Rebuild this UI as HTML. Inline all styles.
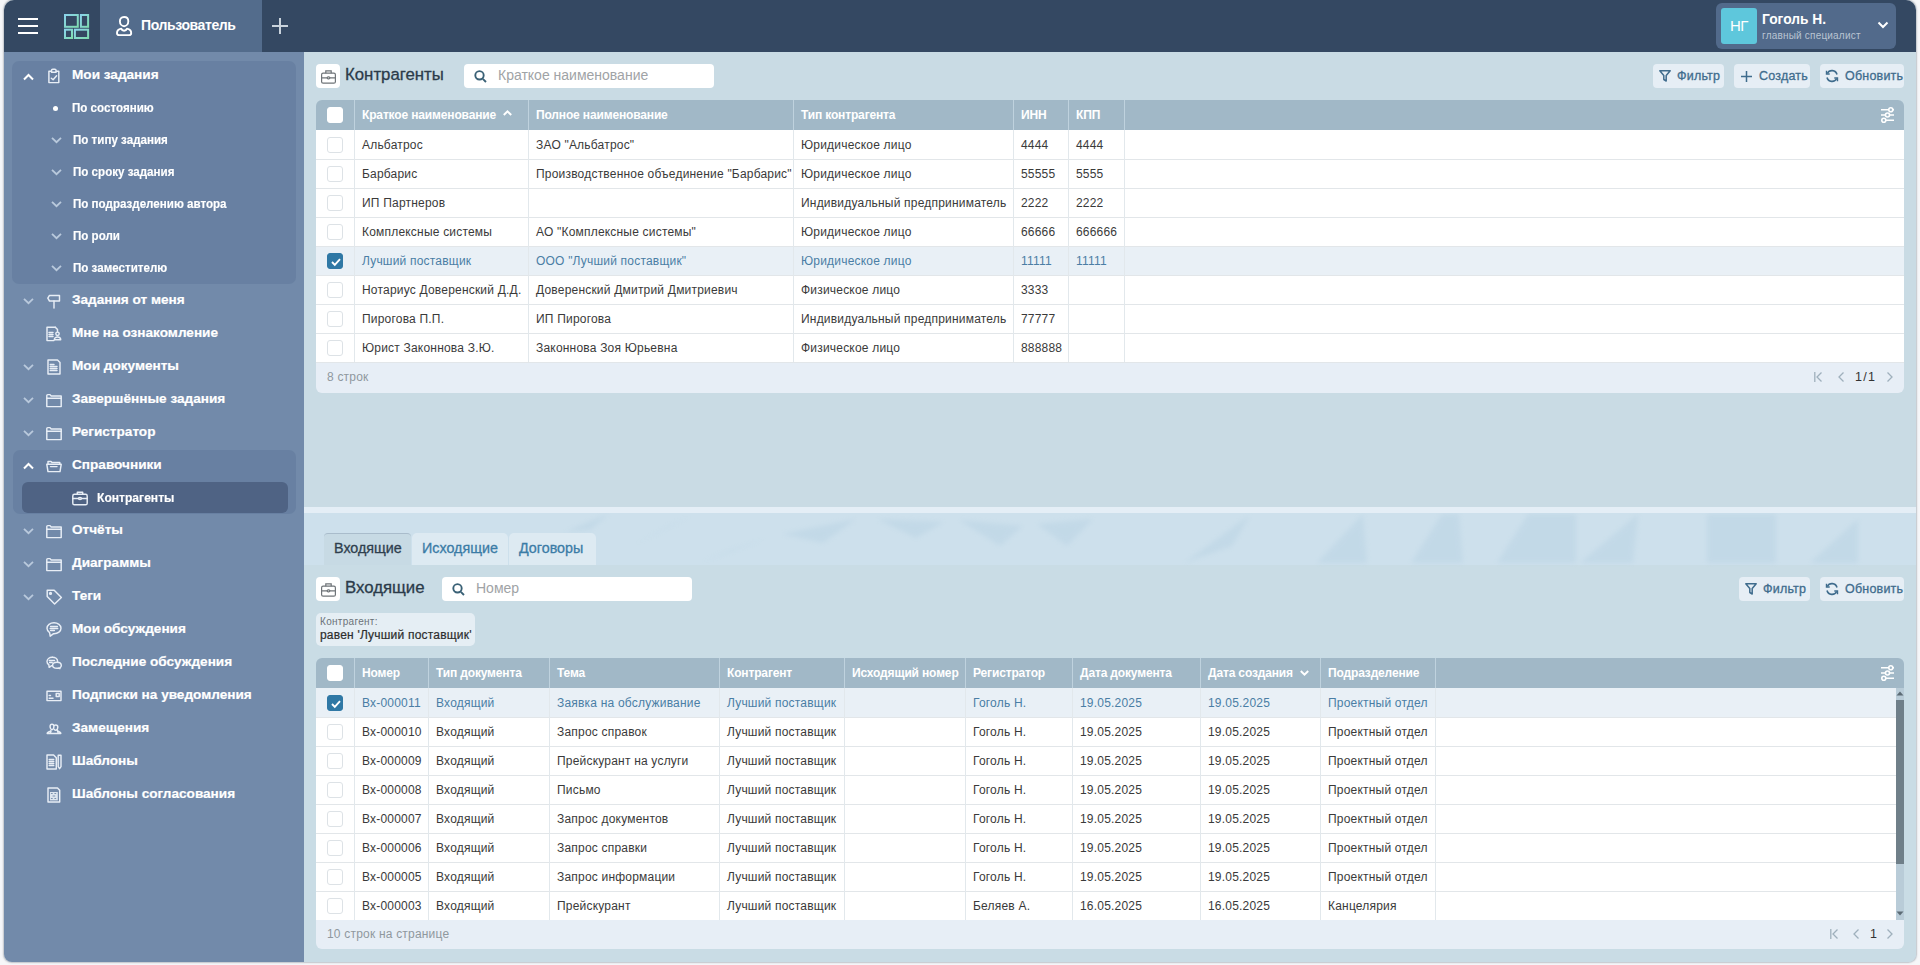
<!DOCTYPE html>
<html><head><meta charset="utf-8"><style>
*{box-sizing:border-box;margin:0;padding:0}
html,body{width:1920px;height:965px;overflow:hidden;background:#f6f7f9;font-family:"Liberation Sans",sans-serif}
.abs{position:absolute}
#frame{position:absolute;left:4px;top:0;width:1912px;height:962px;border-radius:10px 10px 8px 8px;overflow:hidden;background:#c9d9e3;box-shadow:0 0 1.5px 0.5px rgba(90,100,115,0.35)}
#hdr{position:absolute;left:0;top:0;width:1912px;height:52px;background:#344862}
#side{position:absolute;left:0;top:52px;width:300px;height:910px;background:#728aaa}
#main{position:absolute;left:300px;top:52px;width:1612px;height:910px;background:#c9dbe4}
.t{position:absolute;white-space:nowrap}
.si{position:absolute;left:68px;color:#fff;font-weight:bold;font-size:13.6px;line-height:16px;white-space:nowrap;-webkit-text-stroke:0.2px #fff}
.ss{position:absolute;color:#fff;font-weight:bold;font-size:12.6px;line-height:14px;white-space:nowrap;-webkit-text-stroke:0.15px #fff;transform:scaleX(0.92);transform-origin:0 0}
svg{position:absolute;overflow:visible}
.grp{position:absolute;background:#6880a2;border-radius:7px}
.th{position:absolute;top:0;height:30px;background:#a1b8c7;border-radius:6px 6px 0 0}
.hc{position:absolute;top:0;height:30px;color:#fff;font-weight:bold;font-size:12px;letter-spacing:-0.25px;line-height:30px;white-space:nowrap}
.vl{position:absolute;width:1px;background:#dfe6eb}
.row{position:absolute;left:0;height:29px;background:#fff;border-bottom:1px solid #e1e6ea}
.cell{position:absolute;top:0;height:28px;line-height:29px;font-size:12px;color:#333;white-space:nowrap}
.sel .cell{color:#4a7ea5}
.row.sel{background:#e9f0f6}
.cb{position:absolute;width:16px;height:16px;border:1px solid #dde2e6;border-radius:3px;background:#fff}
.cbc{background:#2f78a5;border-color:#2f78a5}
.btn{position:absolute;height:24px;background:#e6eef5;border-radius:4px;color:#3f6c8d;font-size:12px;line-height:24px;white-space:nowrap}
.foot{position:absolute;height:30px;background:#e7eef6;border-radius:0 0 6px 6px;font-size:12px;color:#8c959b;line-height:30px}
</style></head><body>
<div id="frame">
<div id="hdr">
<div class="abs" style="left:14px;top:18px;width:20px;height:2px;background:#fff"></div>
<div class="abs" style="left:14px;top:25px;width:20px;height:2px;background:#fff"></div>
<div class="abs" style="left:14px;top:32px;width:20px;height:2px;background:#fff"></div>
<svg style="left:60px;top:14px" width="25" height="25" viewBox="0 0 25 25" fill="none" stroke-width="2">
<defs><linearGradient id="dg" x1="0" y1="0" x2="1" y2="1"><stop offset="0" stop-color="#8ad3ea"/><stop offset="1" stop-color="#7fdcb0"/></linearGradient></defs>
<g stroke="url(#dg)"><rect x="1" y="1" width="12.8" height="11.8"/><rect x="16.9" y="1" width="7.2" height="11.8"/>
<rect x="1" y="15.7" width="7" height="8.3"/><rect x="10.9" y="15.7" width="13.2" height="8.3"/></g></svg>
<div class="abs" style="left:96px;top:0;width:162px;height:52px;background:#536c8c"></div>
<svg style="left:112px;top:15px" width="17" height="22" viewBox="0 0 17 22" fill="none" stroke="#fff" stroke-width="1.9" stroke-linejoin="round">
<path d="M8.1 2C5 2 3.9 4 3.9 6.2 3.9 9 5.8 11.2 8.1 11.2s4.2-2.2 4.2-5C12.3 4 11.2 2 8.1 2z"/>
<path d="M5.2 13.6C2.8 14.1 1 15.6 1 17.9 1 19.4 1.8 20.1 3.2 20.1H13c1.4 0 2.2-.7 2.2-2.2 0-2.3-1.8-3.8-4.2-4.3-.5 1.3-1.6 2.1-2.9 2.1s-2.4-.8-2.9-2.1z"/></svg>
<div class="t" style="left:137px;top:17px;color:#fff;font-weight:bold;font-size:14px;letter-spacing:-0.4px;line-height:16px">Пользователь</div>
<div class="abs" style="left:268px;top:24.5px;width:16px;height:2px;background:#c9d3dc"></div>
<div class="abs" style="left:275px;top:18px;width:2px;height:16px;background:#c9d3dc"></div>
<div class="abs" style="left:1712px;top:3px;width:180px;height:46px;background:#526a8b;border-radius:6px"></div>
<div class="abs" style="left:1717px;top:8px;width:36px;height:36px;background:#5ec7dc;border-radius:3px;color:#fff;font-size:15px;line-height:36px;text-align:center;letter-spacing:-0.5px">НГ</div>
<div class="t" style="left:1758px;top:12.2px;color:#fff;font-weight:bold;font-size:13.8px;line-height:15px">Гоголь Н.</div>
<div class="t" style="left:1758px;top:30px;color:#b9c4d2;font-size:10px;letter-spacing:0.2px;line-height:12px">главный специалист</div>
<svg style="left:1873px;top:21px" width="12" height="8" viewBox="0 0 12 8" fill="none" stroke="#fff" stroke-width="2"><path d="M1.5 1.5l4.5 4.5 4.5-4.5"/></svg>
</div>
<div id="side">
<div class="grp" style="left:8px;top:9px;width:284px;height:223px"></div>
<div class="grp" style="left:8.5px;top:398px;width:283.5px;height:64px"></div>
<div class="abs" style="left:18px;top:430px;width:266px;height:31px;background:#4f6384;border-radius:6px"></div>
<svg style="left:18.5px;top:21.5px" width="11" height="6" viewBox="0 0 11 6" fill="none" stroke="#fff" stroke-width="2"><path d="M1 5.5L5.5 1 10 5.5"/></svg>
<svg style="left:38px;top:11px" width="24" height="24" viewBox="0 0 24 24" fill="none" stroke="#e8eef6" stroke-width="1.45" stroke-linejoin="round" stroke-linecap="round"><path d="M9.5 8.3H6.9v11.3h9.9V8.3h-2.6"/><path d="M9.5 9.2V7.5c0-.8.6-1.3 1.3-1.3h2c.8 0 1.3.5 1.3 1.3v1.7z"/><path d="M9.3 15.3l1.8 1.5 3.5-4"/></svg>
<div class="si" style="left:68px;top:15px">Мои задания</div>
<div class="abs" style="left:48.5px;top:53.5px;width:5px;height:5px;border-radius:50%;background:#fff"></div>
<div class="ss" style="left:68px;top:48.5px">По состоянию</div>
<svg style="left:46.5px;top:84.5px" width="11" height="6" viewBox="0 0 11 6" fill="none" stroke="#b9c9dc" stroke-width="1.8"><path d="M1 0.8L5.5 5.2 10 0.8"/></svg>
<div class="ss" style="left:69.2px;top:80.5px">По типу задания</div>
<svg style="left:46.5px;top:116.5px" width="11" height="6" viewBox="0 0 11 6" fill="none" stroke="#b9c9dc" stroke-width="1.8"><path d="M1 0.8L5.5 5.2 10 0.8"/></svg>
<div class="ss" style="left:69.2px;top:112.5px">По сроку задания</div>
<svg style="left:46.5px;top:148.5px" width="11" height="6" viewBox="0 0 11 6" fill="none" stroke="#b9c9dc" stroke-width="1.8"><path d="M1 0.8L5.5 5.2 10 0.8"/></svg>
<div class="ss" style="left:69.2px;top:144.5px">По подразделению автора</div>
<svg style="left:46.5px;top:180.5px" width="11" height="6" viewBox="0 0 11 6" fill="none" stroke="#b9c9dc" stroke-width="1.8"><path d="M1 0.8L5.5 5.2 10 0.8"/></svg>
<div class="ss" style="left:69.2px;top:176.5px">По роли</div>
<svg style="left:46.5px;top:212.5px" width="11" height="6" viewBox="0 0 11 6" fill="none" stroke="#b9c9dc" stroke-width="1.8"><path d="M1 0.8L5.5 5.2 10 0.8"/></svg>
<div class="ss" style="left:69.2px;top:208.5px">По заместителю</div>
<svg style="left:18.5px;top:245.5px" width="11" height="6" viewBox="0 0 11 6" fill="none" stroke="#b9c9dc" stroke-width="1.8"><path d="M1 0.8L5.5 5.2 10 0.8"/></svg>
<svg style="left:38px;top:240px" width="24" height="24" viewBox="0 0 24 24" fill="none" stroke="#e8eef6" stroke-width="1.45" stroke-linejoin="round" stroke-linecap="round"><path d="M7.5 3.4h10v5.6h-10L5.8 6.2z"/><path d="M12 9v7"/></svg>
<div class="si" style="left:68px;top:240px">Задания от меня</div>
<svg style="left:38px;top:270px" width="24" height="24" viewBox="0 0 24 24" fill="none" stroke="#e8eef6" stroke-width="1.45" stroke-linejoin="round" stroke-linecap="round"><path d="M13.3 5.3H5v13.3h7"/><path d="M13.3 5.3l2.2 2.3v2.2"/><path d="M7 10.5h4M7 12.5h4M7 14.5h4"/><circle cx="15.5" cy="11.8" r="1.7"/><path d="M12.3 17.8c0-1.6 1.3-2.8 3.2-2.8s3.2 1.2 3.2 2.8z"/></svg>
<div class="si" style="left:68px;top:273px">Мне на ознакомление</div>
<svg style="left:18.5px;top:311.5px" width="11" height="6" viewBox="0 0 11 6" fill="none" stroke="#b9c9dc" stroke-width="1.8"><path d="M1 0.8L5.5 5.2 10 0.8"/></svg>
<svg style="left:38px;top:303px" width="24" height="24" viewBox="0 0 24 24" fill="none" stroke="#e8eef6" stroke-width="1.45" stroke-linejoin="round" stroke-linecap="round"><path d="M6 5h9.5L18 7.5V19H6z"/><path d="M8.2 9.5h3.8M8.2 11.5h6.8M8.2 13.5h6.8M8.2 15.5h6.8"/></svg>
<div class="si" style="left:68px;top:306px">Мои документы</div>
<svg style="left:18.5px;top:344.5px" width="11" height="6" viewBox="0 0 11 6" fill="none" stroke="#b9c9dc" stroke-width="1.8"><path d="M1 0.8L5.5 5.2 10 0.8"/></svg>
<svg style="left:38px;top:336px" width="24" height="24" viewBox="0 0 24 24" fill="none" stroke="#e8eef6" stroke-width="1.45" stroke-linejoin="round" stroke-linecap="round"><path d="M4.8 18.6V7.6c0-.6.4-1 1-1h2.2l1.2 1.4h10v10.6z"/><path d="M4.8 10.3h14.4"/></svg>
<div class="si" style="left:68px;top:339px">Завершённые задания</div>
<svg style="left:18.5px;top:377.5px" width="11" height="6" viewBox="0 0 11 6" fill="none" stroke="#b9c9dc" stroke-width="1.8"><path d="M1 0.8L5.5 5.2 10 0.8"/></svg>
<svg style="left:38px;top:369px" width="24" height="24" viewBox="0 0 24 24" fill="none" stroke="#e8eef6" stroke-width="1.45" stroke-linejoin="round" stroke-linecap="round"><path d="M4.8 18.6V7.6c0-.6.4-1 1-1h2.2l1.2 1.4h10v10.6z"/><path d="M4.8 10.3h14.4"/></svg>
<div class="si" style="left:68px;top:372px">Регистратор</div>
<svg style="left:18.5px;top:410.5px" width="11" height="6" viewBox="0 0 11 6" fill="none" stroke="#fff" stroke-width="2"><path d="M1 5.5L5.5 1 10 5.5"/></svg>
<svg style="left:38px;top:402px" width="24" height="24" viewBox="0 0 24 24" fill="none" stroke="#e8eef6" stroke-width="1.45" stroke-linejoin="round" stroke-linecap="round"><path d="M6 10.2V7.4h3l1 1.1h7.8v1.7"/><path d="M4.8 10.3h14.4l-1.2 7.3H6z"/><path d="M8.5 12.6h6.5"/></svg>
<div class="si" style="left:68px;top:405px">Справочники</div>
<svg style="left:18.5px;top:475.5px" width="11" height="6" viewBox="0 0 11 6" fill="none" stroke="#b9c9dc" stroke-width="1.8"><path d="M1 0.8L5.5 5.2 10 0.8"/></svg>
<svg style="left:38px;top:467px" width="24" height="24" viewBox="0 0 24 24" fill="none" stroke="#e8eef6" stroke-width="1.45" stroke-linejoin="round" stroke-linecap="round"><path d="M4.8 18.6V7.6c0-.6.4-1 1-1h2.2l1.2 1.4h10v10.6z"/><path d="M4.8 10.3h14.4"/></svg>
<div class="si" style="left:68px;top:470px">Отчёты</div>
<svg style="left:18.5px;top:508.5px" width="11" height="6" viewBox="0 0 11 6" fill="none" stroke="#b9c9dc" stroke-width="1.8"><path d="M1 0.8L5.5 5.2 10 0.8"/></svg>
<svg style="left:38px;top:500px" width="24" height="24" viewBox="0 0 24 24" fill="none" stroke="#e8eef6" stroke-width="1.45" stroke-linejoin="round" stroke-linecap="round"><path d="M4.8 18.6V7.6c0-.6.4-1 1-1h2.2l1.2 1.4h10v10.6z"/><path d="M4.8 10.3h14.4"/></svg>
<div class="si" style="left:68px;top:503px">Диаграммы</div>
<svg style="left:18.5px;top:541.5px" width="11" height="6" viewBox="0 0 11 6" fill="none" stroke="#b9c9dc" stroke-width="1.8"><path d="M1 0.8L5.5 5.2 10 0.8"/></svg>
<svg style="left:38px;top:532px" width="24" height="24" viewBox="0 0 24 24" fill="none" stroke="#e8eef6" stroke-width="1.45" stroke-linejoin="round" stroke-linecap="round"><path d="M5.2 6.2h7l7.2 7.3-6.8 6.5-7.4-7.4z"/><circle cx="8.5" cy="9.4" r="0.9"/></svg>
<div class="si" style="left:68px;top:536px">Теги</div>
<svg style="left:38px;top:565px" width="24" height="24" viewBox="0 0 24 24" fill="none" stroke="#e8eef6" stroke-width="1.45" stroke-linejoin="round" stroke-linecap="round"><path d="M12 5.8c-3.9 0-7 2.4-7 5.5 0 1.8 1 3.3 2.6 4.3l.6 3.6 3.4-2.5h.4c3.9 0 7-2.4 7-5.4S15.9 5.8 12 5.8z"/><path d="M8.6 9.5h6.8M8.2 11.5h7.5M8.6 13.5h3.8"/></svg>
<div class="si" style="left:68px;top:569px">Мои обсуждения</div>
<svg style="left:38px;top:598px" width="24" height="24" viewBox="0 0 24 24" fill="none" stroke="#e8eef6" stroke-width="1.45" stroke-linejoin="round" stroke-linecap="round"><path d="M10.3 7.2c-3 0-5.3 1.9-5.3 4.3 0 1.3.7 2.4 1.8 3.2l.4 2.6 2.5-1.6c.2 0 .4.1.6.1"/><path d="M10.3 7.2c3 0 5.3 1.9 5.3 4.2"/><path d="M15 12.2c2.5 0 4.3 1.4 4.3 3.2 0 .9-.5 1.7-1.2 2.2l-.2 1-1.3-.6c-.5.1-1 .2-1.6.2-2.5 0-4.4-1.3-4.4-3S12.5 12.2 15 12.2z"/><path d="M7.3 10.5h5.2M7.6 12.5h2.6"/></svg>
<div class="si" style="left:68px;top:602px">Последние обсуждения</div>
<svg style="left:38px;top:631px" width="24" height="24" viewBox="0 0 24 24" fill="none" stroke="#e8eef6" stroke-width="1.45" stroke-linejoin="round" stroke-linecap="round"><rect x="5" y="8.3" width="14" height="9.3"/><path d="M7.2 12.5h1.3M7.2 15.3h3.8"/><rect x="14.2" y="10.4" width="3" height="3"/></svg>
<div class="si" style="left:68px;top:635px">Подписки на уведомления</div>
<svg style="left:38px;top:664px" width="24" height="24" viewBox="0 0 24 24" fill="none" stroke="#e8eef6" stroke-width="1.45" stroke-linejoin="round" stroke-linecap="round"><path d="M8.8 15.2c-2 .4-3.6 1.2-3.6 2.3h13.6c0-1.1-1.4-1.8-3.2-2.2"/><path d="M10 8.3c-1.2 0-1.9 1-1.9 2.2 0 1.5.9 3.2 1.9 3.2s1.9-1.7 1.9-3.2c0-1.2-.7-2.2-1.9-2.2z"/><path d="M12.2 9.5c.4-.3 1-.5 1.6-.5 1.2 0 2 .9 2 2.1 0 1.5-.9 3.2-2 3.2-.6 0-1.1-.4-1.5-1"/><path d="M8.8 14.6c0 .7-.1 1.5-.2 2.2M15.5 14.2l.6 2.8"/></svg>
<div class="si" style="left:68px;top:668px">Замещения</div>
<svg style="left:38px;top:697px" width="24" height="24" viewBox="0 0 24 24" fill="none" stroke="#e8eef6" stroke-width="1.45" stroke-linejoin="round" stroke-linecap="round"><path d="M11.6 6H5v14h9.3V8.7z"/><path d="M7.2 10.5h4.5M7.2 12.5h4.5M7.2 14.5h4.5M7.2 16.5h4.5"/><path d="M16.2 6.2h2.8v11.5l-1.4 2-1.4-2z"/></svg>
<div class="si" style="left:68px;top:701px">Шаблоны</div>
<svg style="left:38px;top:730px" width="24" height="24" viewBox="0 0 24 24" fill="none" stroke="#e8eef6" stroke-width="1.45" stroke-linejoin="round" stroke-linecap="round"><path d="M6 6h9.5L17.7 8.3V20H6z"/><rect x="8" y="10" width="7.8" height="8.4" fill="#e8eef6" stroke="none" opacity="0.9"/><path d="M9.3 11.5h1M12.8 11.5h1M9.3 16.5h1M12.8 16.5h1M11 14h1.8" stroke="#7089a8" stroke-width="0.9"/></svg>
<div class="si" style="left:68px;top:734px">Шаблоны согласования</div>
<svg style="left:64px;top:434px" width="24" height="24" viewBox="0 0 24 24" fill="none" stroke="#e8eef6" stroke-width="1.45" stroke-linejoin="round" stroke-linecap="round"><rect x="4.8" y="8.3" width="14.4" height="10.5" rx="1.6"/><path d="M9.3 8.3V6.2h5.4v2.1"/><path d="M4.8 12.4h5.7M13.5 12.4h5.7"/><ellipse cx="12" cy="12.4" rx="1.5" ry="1"/></svg>
<div class="ss" style="left:93px;top:438.5px;transform:scaleX(0.96)">Контрагенты</div>
</div>
<div id="main">
<div class="abs" style="left:12px;top:12px;width:24px;height:24px;background:#fff;border-radius:4px"></div>
<svg style="left:16.5px;top:17.5px" width="15" height="14" viewBox="0 0 15 14" fill="none" stroke="#6f7478" stroke-width="1.2"><rect x="0.6" y="3.2" width="13.8" height="10" rx="1.5"/><path d="M4.8 3.2V0.8h5.4v2.4M0.6 7.8h5.6M8.8 7.8h5.6"/><rect x="6.2" y="6.8" width="2.6" height="2" rx="1"/></svg>
<div class="t" style="left:41px;top:13px;font-size:16.8px;color:#2b3b4a;line-height:20px;-webkit-text-stroke:0.3px #2b3b4a">Контрагенты</div>
<div class="abs" style="left:160px;top:12px;width:250px;height:24px;background:#fff;border-radius:4px"></div>
<svg style="left:170px;top:18px" width="13" height="13" viewBox="0 0 13 13" fill="none" stroke="#3a6176" stroke-width="1.9"><circle cx="5.5" cy="5.3" r="4.2"/><path d="M8.8 8.8l3.2 3.2"/></svg>
<div class="t" style="left:194px;top:15px;font-size:14px;color:#9fa3a6;line-height:16px">Краткое наименование</div>
<div class="abs" style="left:1349px;top:12px;width:71px;height:24px;background:#e6eef5;border-radius:4px"></div>
<svg style="left:1355px;top:18px" width="12" height="12" viewBox="0 0 12 12" fill="none" stroke="#3f6c8d" stroke-width="1.5" stroke-linejoin="round"><path d="M0.8 0.8h10.4L7.2 5.5V11L4.8 9.5V5.5z"/></svg>
<div class="t" style="left:1373px;top:17px;font-size:12.5px;letter-spacing:0.2px;color:#3f6c8d;line-height:14px;-webkit-text-stroke:0.3px #3f6c8d">Фильтр</div>
<div class="abs" style="left:1430px;top:12px;width:76px;height:24px;background:#e6eef5;border-radius:4px"></div>
<svg style="left:1437px;top:18.5px" width="11" height="11" viewBox="0 0 11 11" fill="none" stroke="#3f6c8d" stroke-width="1.5"><path d="M5.5 0v11M0 5.5h11"/></svg>
<div class="t" style="left:1455px;top:17px;font-size:12.5px;letter-spacing:0.2px;color:#3f6c8d;line-height:14px;-webkit-text-stroke:0.3px #3f6c8d">Создать</div>
<div class="abs" style="left:1516px;top:12px;width:84px;height:24px;background:#e6eef5;border-radius:4px"></div>
<svg style="left:1521px;top:17px" width="14" height="14" viewBox="0 0 14 14" fill="none" stroke="#3f6c8d" stroke-width="1.6"><path d="M12 5.5A5.2 5.2 0 0 0 2.3 4.5M2 8.5a5.2 5.2 0 0 0 9.7 1"/><path d="M1.5 1.8v3.2h3.2M12.5 12.2V9H9.3" stroke-width="1.4"/></svg>
<div class="t" style="left:1541px;top:17px;font-size:12.5px;letter-spacing:0.2px;color:#3f6c8d;line-height:14px;-webkit-text-stroke:0.3px #3f6c8d">Обновить</div>
<div class="th" style="left:12px;top:48px;width:1588px"></div><div class="abs" style="left:12px;top:78px;width:1588px;height:233px;background:#fff"></div><div class="abs" style="left:12px;top:78px;width:1588px;height:30px;background:#fff"></div><div class="abs" style="left:12px;top:107px;width:1588px;height:30px;background:#fff"></div><div class="abs" style="left:12px;top:136px;width:1588px;height:30px;background:#fff"></div><div class="abs" style="left:12px;top:165px;width:1588px;height:30px;background:#fff"></div><div class="abs" style="left:12px;top:194px;width:1588px;height:30px;background:#e9f0f6"></div><div class="abs" style="left:12px;top:223px;width:1588px;height:30px;background:#fff"></div><div class="abs" style="left:12px;top:252px;width:1588px;height:30px;background:#fff"></div><div class="abs" style="left:12px;top:281px;width:1588px;height:30px;background:#fff"></div><div class="abs" style="left:12px;top:107px;width:1588px;height:1px;background:#e2e6e9"></div><div class="abs" style="left:12px;top:136px;width:1588px;height:1px;background:#e2e6e9"></div><div class="abs" style="left:12px;top:165px;width:1588px;height:1px;background:#e2e6e9"></div><div class="abs" style="left:12px;top:194px;width:1588px;height:1px;background:#e2e6e9"></div><div class="abs" style="left:12px;top:223px;width:1588px;height:1px;background:#e2e6e9"></div><div class="abs" style="left:12px;top:252px;width:1588px;height:1px;background:#e2e6e9"></div><div class="abs" style="left:12px;top:281px;width:1588px;height:1px;background:#e2e6e9"></div><div class="abs" style="left:12px;top:310px;width:1588px;height:1px;background:#e2e6e9"></div><div class="abs" style="left:50px;top:48px;width:1px;height:30px;background:#bfd2de"></div><div class="abs" style="left:50px;top:78px;width:1px;height:232px;background:#e2e8ec"></div><div class="abs" style="left:224px;top:48px;width:1px;height:30px;background:#bfd2de"></div><div class="abs" style="left:224px;top:78px;width:1px;height:232px;background:#e2e8ec"></div><div class="abs" style="left:489px;top:48px;width:1px;height:30px;background:#bfd2de"></div><div class="abs" style="left:489px;top:78px;width:1px;height:232px;background:#e2e8ec"></div><div class="abs" style="left:709px;top:48px;width:1px;height:30px;background:#bfd2de"></div><div class="abs" style="left:709px;top:78px;width:1px;height:232px;background:#e2e8ec"></div><div class="abs" style="left:764px;top:48px;width:1px;height:30px;background:#bfd2de"></div><div class="abs" style="left:764px;top:78px;width:1px;height:232px;background:#e2e8ec"></div><div class="abs" style="left:820px;top:48px;width:1px;height:30px;background:#bfd2de"></div><div class="abs" style="left:820px;top:78px;width:1px;height:232px;background:#e2e8ec"></div><div class="abs" style="left:12px;top:78px;width:1588px;height:0px;"></div><div class="cb" style="left:23px;top:55px;border-color:#fff"></div><div class="t" style="left:58px;top:56px;color:#fff;font-weight:bold;font-size:12px;letter-spacing:-0.15px;line-height:14px">Краткое наименование</div><div class="t" style="left:232px;top:56px;color:#fff;font-weight:bold;font-size:12px;letter-spacing:-0.15px;line-height:14px">Полное наименование</div><div class="t" style="left:497px;top:56px;color:#fff;font-weight:bold;font-size:12px;letter-spacing:-0.15px;line-height:14px">Тип контрагента</div><div class="t" style="left:717px;top:56px;color:#fff;font-weight:bold;font-size:12px;letter-spacing:-0.15px;line-height:14px">ИНН</div><div class="t" style="left:772px;top:56px;color:#fff;font-weight:bold;font-size:12px;letter-spacing:-0.15px;line-height:14px">КПП</div><div class="cb" style="left:23px;top:85px"></div><div class="t" style="left:58px;top:86px;font-size:12px;letter-spacing:0.2px;color:#3a3a3a;line-height:14px">Альбатрос</div><div class="t" style="left:232px;top:86px;font-size:12px;letter-spacing:0.2px;color:#3a3a3a;line-height:14px">ЗАО "Альбатрос"</div><div class="t" style="left:497px;top:86px;font-size:12px;letter-spacing:0.2px;color:#3a3a3a;line-height:14px">Юридическое лицо</div><div class="t" style="left:717px;top:86px;font-size:12px;letter-spacing:0.2px;color:#3a3a3a;line-height:14px">4444</div><div class="t" style="left:772px;top:86px;font-size:12px;letter-spacing:0.2px;color:#3a3a3a;line-height:14px">4444</div><div class="cb" style="left:23px;top:114px"></div><div class="t" style="left:58px;top:115px;font-size:12px;letter-spacing:0.2px;color:#3a3a3a;line-height:14px">Барбарис</div><div class="t" style="left:232px;top:115px;font-size:12px;letter-spacing:0.2px;color:#3a3a3a;line-height:14px">Производственное объединение "Барбарис"</div><div class="t" style="left:497px;top:115px;font-size:12px;letter-spacing:0.2px;color:#3a3a3a;line-height:14px">Юридическое лицо</div><div class="t" style="left:717px;top:115px;font-size:12px;letter-spacing:0.2px;color:#3a3a3a;line-height:14px">55555</div><div class="t" style="left:772px;top:115px;font-size:12px;letter-spacing:0.2px;color:#3a3a3a;line-height:14px">5555</div><div class="cb" style="left:23px;top:143px"></div><div class="t" style="left:58px;top:144px;font-size:12px;letter-spacing:0.2px;color:#3a3a3a;line-height:14px">ИП Партнеров</div><div class="t" style="left:497px;top:144px;font-size:12px;letter-spacing:0.2px;color:#3a3a3a;line-height:14px">Индивидуальный предприниматель</div><div class="t" style="left:717px;top:144px;font-size:12px;letter-spacing:0.2px;color:#3a3a3a;line-height:14px">2222</div><div class="t" style="left:772px;top:144px;font-size:12px;letter-spacing:0.2px;color:#3a3a3a;line-height:14px">2222</div><div class="cb" style="left:23px;top:172px"></div><div class="t" style="left:58px;top:173px;font-size:12px;letter-spacing:0.2px;color:#3a3a3a;line-height:14px">Комплексные системы</div><div class="t" style="left:232px;top:173px;font-size:12px;letter-spacing:0.2px;color:#3a3a3a;line-height:14px">АО "Комплексные системы"</div><div class="t" style="left:497px;top:173px;font-size:12px;letter-spacing:0.2px;color:#3a3a3a;line-height:14px">Юридическое лицо</div><div class="t" style="left:717px;top:173px;font-size:12px;letter-spacing:0.2px;color:#3a3a3a;line-height:14px">66666</div><div class="t" style="left:772px;top:173px;font-size:12px;letter-spacing:0.2px;color:#3a3a3a;line-height:14px">666666</div><div class="cb cbc" style="left:23px;top:201px"><svg style="left:2.5px;top:3.5px" width="10" height="8" viewBox="0 0 10 8" fill="none" stroke="#fff" stroke-width="1.9"><path d="M1 4l2.8 2.8L9 1.2"/></svg></div><div class="t" style="left:58px;top:202px;font-size:12px;letter-spacing:0.2px;color:#4a7ea5;line-height:14px">Лучший поставщик</div><div class="t" style="left:232px;top:202px;font-size:12px;letter-spacing:0.2px;color:#4a7ea5;line-height:14px">ООО "Лучший поставщик"</div><div class="t" style="left:497px;top:202px;font-size:12px;letter-spacing:0.2px;color:#4a7ea5;line-height:14px">Юридическое лицо</div><div class="t" style="left:717px;top:202px;font-size:12px;letter-spacing:0.2px;color:#4a7ea5;line-height:14px">11111</div><div class="t" style="left:772px;top:202px;font-size:12px;letter-spacing:0.2px;color:#4a7ea5;line-height:14px">11111</div><div class="cb" style="left:23px;top:230px"></div><div class="t" style="left:58px;top:231px;font-size:12px;letter-spacing:0.2px;color:#3a3a3a;line-height:14px">Нотариус Доверенский Д.Д.</div><div class="t" style="left:232px;top:231px;font-size:12px;letter-spacing:0.2px;color:#3a3a3a;line-height:14px">Доверенский Дмитрий Дмитриевич</div><div class="t" style="left:497px;top:231px;font-size:12px;letter-spacing:0.2px;color:#3a3a3a;line-height:14px">Физическое лицо</div><div class="t" style="left:717px;top:231px;font-size:12px;letter-spacing:0.2px;color:#3a3a3a;line-height:14px">3333</div><div class="cb" style="left:23px;top:259px"></div><div class="t" style="left:58px;top:260px;font-size:12px;letter-spacing:0.2px;color:#3a3a3a;line-height:14px">Пирогова П.П.</div><div class="t" style="left:232px;top:260px;font-size:12px;letter-spacing:0.2px;color:#3a3a3a;line-height:14px">ИП Пирогова</div><div class="t" style="left:497px;top:260px;font-size:12px;letter-spacing:0.2px;color:#3a3a3a;line-height:14px">Индивидуальный предприниматель</div><div class="t" style="left:717px;top:260px;font-size:12px;letter-spacing:0.2px;color:#3a3a3a;line-height:14px">77777</div><div class="cb" style="left:23px;top:288px"></div><div class="t" style="left:58px;top:289px;font-size:12px;letter-spacing:0.2px;color:#3a3a3a;line-height:14px">Юрист Законнова З.Ю.</div><div class="t" style="left:232px;top:289px;font-size:12px;letter-spacing:0.2px;color:#3a3a3a;line-height:14px">Законнова Зоя Юрьевна</div><div class="t" style="left:497px;top:289px;font-size:12px;letter-spacing:0.2px;color:#3a3a3a;line-height:14px">Физическое лицо</div><div class="t" style="left:717px;top:289px;font-size:12px;letter-spacing:0.2px;color:#3a3a3a;line-height:14px">888888</div><div class="foot" style="left:12px;top:311px;width:1588px;height:30px"></div><div class="t" style="left:23px;top:318.3px;font-size:12px;letter-spacing:0.2px;color:#8f989e;line-height:14px">8 строк</div><svg style="left:1577px;top:55px" width="13" height="16" viewBox="0 0 13 16" fill="none" stroke="#fff" stroke-width="1.6"><circle cx="9.8" cy="2.8" r="2"/><circle cx="6.5" cy="8" r="2"/><circle cx="2.8" cy="13.2" r="2"/><path d="M0 2.8h7.8M11.8 2.8H13M0 8h4.5M8.5 8H13M4.8 13.2H13"/></svg>
<svg style="left:1510px;top:320px" width="9" height="10" viewBox="0 0 9 10" fill="none" stroke="#9fb0bc" stroke-width="1.3"><path d="M0.8 0v10M7.5 0.5L3 5l4.5 4.5"/></svg><svg style="left:1534px;top:320px" width="6" height="10" viewBox="0 0 6 10" fill="none" stroke="#9fb0bc" stroke-width="1.3"><path d="M5.5 0.5L1 5l4.5 4.5"/></svg><svg style="left:1583px;top:320px" width="6" height="10" viewBox="0 0 6 10" fill="none" stroke="#9fb0bc" stroke-width="1.3"><path d="M0.5 0.5L5 5 0.5 9.5"/></svg><div class="t" style="left:1551px;top:318px;font-size:12.5px;color:#333;line-height:14px;letter-spacing:1.3px">1/1</div>
<svg style="left:199px;top:58px" width="9" height="6" viewBox="0 0 9 6" fill="none" stroke="#fff" stroke-width="2"><path d="M0.8 5L4.5 1.3 8.2 5"/></svg>
<div class="abs" style="left:0px;top:461px;width:1612px;height:52px;background:#cde0ec"></div>
<div class="abs" style="left:0px;top:513px;width:1612px;height:397px;background:#c9dce5"></div>
<svg style="left:0px;top:461px" width="1612" height="52" viewBox="0 0 1612 52"><g fill="#9fc2d8" opacity="0.22" style="filter:blur(2.5px)"><polygon points="328,33 389,2 365,13"/><polygon points="396,50 464,25 427,37"/><polygon points="478,21 552,6 519,30"/><polygon points="573,6 640,9 612,25"/><polygon points="655,7 719,13 696,33"/><polygon points="733,11 789,6 763,33"/><polygon points="880,50 946,2 928,33"/><polygon points="1013,50 1059,1 1063,50"/><polygon points="1107,50 1138,1 1155,1 1159,50"/><polygon points="1193,50 1224,1 1272,1 1272,50"/><polygon points="1276,50 1334,1 1329,50"/><polygon points="1403,1 1472,1 1472,50 1403,50"/><polygon points="1506,50 1554,6 1554,50"/><polygon points="261,19 306,0 286,17"/></g></svg>
<div class="abs" style="left:0px;top:455px;width:1612px;height:6px;background:#e4eef6"></div>
<div class="abs" style="left:20px;top:481px;width:87px;height:32px;background:rgba(190,205,215,0.35);border-radius:4px 4px 0 0;border-top:1px solid #a9bccb"></div>
<div class="abs" style="left:108px;top:481px;width:96px;height:32px;background:rgba(228,238,245,0.7);border-radius:5px 5px 0 0"></div>
<div class="abs" style="left:205px;top:481px;width:87px;height:32px;background:rgba(228,238,245,0.7);border-radius:5px 5px 0 0"></div>
<div class="t" style="left:30px;top:488px;font-size:14.3px;color:#2f3f4e;line-height:16px;-webkit-text-stroke:0.3px #2f3f4e">Входящие</div>
<div class="t" style="left:118px;top:488px;font-size:14.3px;color:#3b7ca6;line-height:16px;-webkit-text-stroke:0.3px #3b7ca6">Исходящие</div>
<div class="t" style="left:215px;top:488px;font-size:14.3px;color:#3b7ca6;line-height:16px;-webkit-text-stroke:0.3px #3b7ca6">Договоры</div>
<div class="abs" style="left:12px;top:525px;width:24px;height:24px;background:#fff;border-radius:4px"></div>
<svg style="left:16.5px;top:530.5px" width="15" height="14" viewBox="0 0 15 14" fill="none" stroke="#6f7478" stroke-width="1.2"><rect x="0.6" y="3.2" width="13.8" height="10" rx="1.5"/><path d="M4.8 3.2V0.8h5.4v2.4M0.6 7.8h5.6M8.8 7.8h5.6"/><rect x="6.2" y="6.8" width="2.6" height="2" rx="1"/></svg>
<div class="t" style="left:41px;top:526px;font-size:16.8px;color:#2b3b4a;line-height:20px;-webkit-text-stroke:0.3px #2b3b4a">Входящие</div>
<div class="abs" style="left:138px;top:525px;width:250px;height:24px;background:#fff;border-radius:4px"></div>
<svg style="left:148px;top:531px" width="13" height="13" viewBox="0 0 13 13" fill="none" stroke="#3a6176" stroke-width="1.9"><circle cx="5.5" cy="5.3" r="4.2"/><path d="M8.8 8.8l3.2 3.2"/></svg>
<div class="t" style="left:172px;top:528px;font-size:14px;color:#9fa3a6;line-height:16px">Номер</div>
<div class="abs" style="left:1435px;top:525px;width:71px;height:24px;background:#e6eef5;border-radius:4px"></div>
<svg style="left:1441px;top:531px" width="12" height="12" viewBox="0 0 12 12" fill="none" stroke="#3f6c8d" stroke-width="1.5" stroke-linejoin="round"><path d="M0.8 0.8h10.4L7.2 5.5V11L4.8 9.5V5.5z"/></svg>
<div class="t" style="left:1459px;top:530px;font-size:12.5px;letter-spacing:0.2px;color:#3f6c8d;line-height:14px;-webkit-text-stroke:0.3px #3f6c8d">Фильтр</div>
<div class="abs" style="left:1516px;top:525px;width:84px;height:24px;background:#e6eef5;border-radius:4px"></div>
<svg style="left:1521px;top:530px" width="14" height="14" viewBox="0 0 14 14" fill="none" stroke="#3f6c8d" stroke-width="1.6"><path d="M12 5.5A5.2 5.2 0 0 0 2.3 4.5M2 8.5a5.2 5.2 0 0 0 9.7 1"/><path d="M1.5 1.8v3.2h3.2M12.5 12.2V9H9.3" stroke-width="1.4"/></svg>
<div class="t" style="left:1541px;top:530px;font-size:12.5px;letter-spacing:0.2px;color:#3f6c8d;line-height:14px;-webkit-text-stroke:0.3px #3f6c8d">Обновить</div>
<div class="abs" style="left:12px;top:561px;width:159px;height:33px;background:#e5eef4;border-radius:5px"></div>
<div class="t" style="left:16px;top:563.5px;font-size:10px;letter-spacing:0.3px;color:#6b7278;line-height:12px">Контрагент:</div>
<div class="t" style="left:16px;top:575.7px;font-size:12px;letter-spacing:0.2px;color:#2d2d2d;line-height:14px;-webkit-text-stroke:0.2px #2d2d2d">равен 'Лучший поставщик'</div>
<div class="th" style="left:12px;top:606px;width:1588px"></div><div class="abs" style="left:12px;top:636px;width:1588px;height:233px;background:#fff"></div><div class="abs" style="left:12px;top:636px;width:1588px;height:30px;background:#e9f0f6"></div><div class="abs" style="left:12px;top:665px;width:1588px;height:30px;background:#fff"></div><div class="abs" style="left:12px;top:694px;width:1588px;height:30px;background:#fff"></div><div class="abs" style="left:12px;top:723px;width:1588px;height:30px;background:#fff"></div><div class="abs" style="left:12px;top:752px;width:1588px;height:30px;background:#fff"></div><div class="abs" style="left:12px;top:781px;width:1588px;height:30px;background:#fff"></div><div class="abs" style="left:12px;top:810px;width:1588px;height:30px;background:#fff"></div><div class="abs" style="left:12px;top:839px;width:1588px;height:30px;background:#fff"></div><div class="abs" style="left:12px;top:665px;width:1588px;height:1px;background:#e2e6e9"></div><div class="abs" style="left:12px;top:694px;width:1588px;height:1px;background:#e2e6e9"></div><div class="abs" style="left:12px;top:723px;width:1588px;height:1px;background:#e2e6e9"></div><div class="abs" style="left:12px;top:752px;width:1588px;height:1px;background:#e2e6e9"></div><div class="abs" style="left:12px;top:781px;width:1588px;height:1px;background:#e2e6e9"></div><div class="abs" style="left:12px;top:810px;width:1588px;height:1px;background:#e2e6e9"></div><div class="abs" style="left:12px;top:839px;width:1588px;height:1px;background:#e2e6e9"></div><div class="abs" style="left:50px;top:606px;width:1px;height:30px;background:#bfd2de"></div><div class="abs" style="left:50px;top:636px;width:1px;height:232px;background:#e2e8ec"></div><div class="abs" style="left:124px;top:606px;width:1px;height:30px;background:#bfd2de"></div><div class="abs" style="left:124px;top:636px;width:1px;height:232px;background:#e2e8ec"></div><div class="abs" style="left:245px;top:606px;width:1px;height:30px;background:#bfd2de"></div><div class="abs" style="left:245px;top:636px;width:1px;height:232px;background:#e2e8ec"></div><div class="abs" style="left:415px;top:606px;width:1px;height:30px;background:#bfd2de"></div><div class="abs" style="left:415px;top:636px;width:1px;height:232px;background:#e2e8ec"></div><div class="abs" style="left:540px;top:606px;width:1px;height:30px;background:#bfd2de"></div><div class="abs" style="left:540px;top:636px;width:1px;height:232px;background:#e2e8ec"></div><div class="abs" style="left:661px;top:606px;width:1px;height:30px;background:#bfd2de"></div><div class="abs" style="left:661px;top:636px;width:1px;height:232px;background:#e2e8ec"></div><div class="abs" style="left:768px;top:606px;width:1px;height:30px;background:#bfd2de"></div><div class="abs" style="left:768px;top:636px;width:1px;height:232px;background:#e2e8ec"></div><div class="abs" style="left:896px;top:606px;width:1px;height:30px;background:#bfd2de"></div><div class="abs" style="left:896px;top:636px;width:1px;height:232px;background:#e2e8ec"></div><div class="abs" style="left:1016px;top:606px;width:1px;height:30px;background:#bfd2de"></div><div class="abs" style="left:1016px;top:636px;width:1px;height:232px;background:#e2e8ec"></div><div class="abs" style="left:1131px;top:606px;width:1px;height:30px;background:#bfd2de"></div><div class="abs" style="left:1131px;top:636px;width:1px;height:232px;background:#e2e8ec"></div><div class="abs" style="left:12px;top:636px;width:1588px;height:0px;"></div><div class="cb" style="left:23px;top:613px;border-color:#fff"></div><div class="t" style="left:58px;top:614px;color:#fff;font-weight:bold;font-size:12px;letter-spacing:-0.15px;line-height:14px">Номер</div><div class="t" style="left:132px;top:614px;color:#fff;font-weight:bold;font-size:12px;letter-spacing:-0.15px;line-height:14px">Тип документа</div><div class="t" style="left:253px;top:614px;color:#fff;font-weight:bold;font-size:12px;letter-spacing:-0.15px;line-height:14px">Тема</div><div class="t" style="left:423px;top:614px;color:#fff;font-weight:bold;font-size:12px;letter-spacing:-0.15px;line-height:14px">Контрагент</div><div class="t" style="left:548px;top:614px;color:#fff;font-weight:bold;font-size:12px;letter-spacing:-0.15px;line-height:14px">Исходящий номер</div><div class="t" style="left:669px;top:614px;color:#fff;font-weight:bold;font-size:12px;letter-spacing:-0.15px;line-height:14px">Регистратор</div><div class="t" style="left:776px;top:614px;color:#fff;font-weight:bold;font-size:12px;letter-spacing:-0.15px;line-height:14px">Дата документа</div><div class="t" style="left:904px;top:614px;color:#fff;font-weight:bold;font-size:12px;letter-spacing:-0.15px;line-height:14px">Дата создания</div><div class="t" style="left:1024px;top:614px;color:#fff;font-weight:bold;font-size:12px;letter-spacing:-0.15px;line-height:14px">Подразделение</div><div class="cb cbc" style="left:23px;top:643px"><svg style="left:2.5px;top:3.5px" width="10" height="8" viewBox="0 0 10 8" fill="none" stroke="#fff" stroke-width="1.9"><path d="M1 4l2.8 2.8L9 1.2"/></svg></div><div class="t" style="left:58px;top:644px;font-size:12px;letter-spacing:0.2px;color:#4a7ea5;line-height:14px">Вх-000011</div><div class="t" style="left:132px;top:644px;font-size:12px;letter-spacing:0.2px;color:#4a7ea5;line-height:14px">Входящий</div><div class="t" style="left:253px;top:644px;font-size:12px;letter-spacing:0.2px;color:#4a7ea5;line-height:14px">Заявка на обслуживание</div><div class="t" style="left:423px;top:644px;font-size:12px;letter-spacing:0.2px;color:#4a7ea5;line-height:14px">Лучший поставщик</div><div class="t" style="left:669px;top:644px;font-size:12px;letter-spacing:0.2px;color:#4a7ea5;line-height:14px">Гоголь Н.</div><div class="t" style="left:776px;top:644px;font-size:12px;letter-spacing:0.2px;color:#4a7ea5;line-height:14px">19.05.2025</div><div class="t" style="left:904px;top:644px;font-size:12px;letter-spacing:0.2px;color:#4a7ea5;line-height:14px">19.05.2025</div><div class="t" style="left:1024px;top:644px;font-size:12px;letter-spacing:0.2px;color:#4a7ea5;line-height:14px">Проектный отдел</div><div class="cb" style="left:23px;top:672px"></div><div class="t" style="left:58px;top:673px;font-size:12px;letter-spacing:0.2px;color:#3a3a3a;line-height:14px">Вх-000010</div><div class="t" style="left:132px;top:673px;font-size:12px;letter-spacing:0.2px;color:#3a3a3a;line-height:14px">Входящий</div><div class="t" style="left:253px;top:673px;font-size:12px;letter-spacing:0.2px;color:#3a3a3a;line-height:14px">Запрос справок</div><div class="t" style="left:423px;top:673px;font-size:12px;letter-spacing:0.2px;color:#3a3a3a;line-height:14px">Лучший поставщик</div><div class="t" style="left:669px;top:673px;font-size:12px;letter-spacing:0.2px;color:#3a3a3a;line-height:14px">Гоголь Н.</div><div class="t" style="left:776px;top:673px;font-size:12px;letter-spacing:0.2px;color:#3a3a3a;line-height:14px">19.05.2025</div><div class="t" style="left:904px;top:673px;font-size:12px;letter-spacing:0.2px;color:#3a3a3a;line-height:14px">19.05.2025</div><div class="t" style="left:1024px;top:673px;font-size:12px;letter-spacing:0.2px;color:#3a3a3a;line-height:14px">Проектный отдел</div><div class="cb" style="left:23px;top:701px"></div><div class="t" style="left:58px;top:702px;font-size:12px;letter-spacing:0.2px;color:#3a3a3a;line-height:14px">Вх-000009</div><div class="t" style="left:132px;top:702px;font-size:12px;letter-spacing:0.2px;color:#3a3a3a;line-height:14px">Входящий</div><div class="t" style="left:253px;top:702px;font-size:12px;letter-spacing:0.2px;color:#3a3a3a;line-height:14px">Прейскурант на услуги</div><div class="t" style="left:423px;top:702px;font-size:12px;letter-spacing:0.2px;color:#3a3a3a;line-height:14px">Лучший поставщик</div><div class="t" style="left:669px;top:702px;font-size:12px;letter-spacing:0.2px;color:#3a3a3a;line-height:14px">Гоголь Н.</div><div class="t" style="left:776px;top:702px;font-size:12px;letter-spacing:0.2px;color:#3a3a3a;line-height:14px">19.05.2025</div><div class="t" style="left:904px;top:702px;font-size:12px;letter-spacing:0.2px;color:#3a3a3a;line-height:14px">19.05.2025</div><div class="t" style="left:1024px;top:702px;font-size:12px;letter-spacing:0.2px;color:#3a3a3a;line-height:14px">Проектный отдел</div><div class="cb" style="left:23px;top:730px"></div><div class="t" style="left:58px;top:731px;font-size:12px;letter-spacing:0.2px;color:#3a3a3a;line-height:14px">Вх-000008</div><div class="t" style="left:132px;top:731px;font-size:12px;letter-spacing:0.2px;color:#3a3a3a;line-height:14px">Входящий</div><div class="t" style="left:253px;top:731px;font-size:12px;letter-spacing:0.2px;color:#3a3a3a;line-height:14px">Письмо</div><div class="t" style="left:423px;top:731px;font-size:12px;letter-spacing:0.2px;color:#3a3a3a;line-height:14px">Лучший поставщик</div><div class="t" style="left:669px;top:731px;font-size:12px;letter-spacing:0.2px;color:#3a3a3a;line-height:14px">Гоголь Н.</div><div class="t" style="left:776px;top:731px;font-size:12px;letter-spacing:0.2px;color:#3a3a3a;line-height:14px">19.05.2025</div><div class="t" style="left:904px;top:731px;font-size:12px;letter-spacing:0.2px;color:#3a3a3a;line-height:14px">19.05.2025</div><div class="t" style="left:1024px;top:731px;font-size:12px;letter-spacing:0.2px;color:#3a3a3a;line-height:14px">Проектный отдел</div><div class="cb" style="left:23px;top:759px"></div><div class="t" style="left:58px;top:760px;font-size:12px;letter-spacing:0.2px;color:#3a3a3a;line-height:14px">Вх-000007</div><div class="t" style="left:132px;top:760px;font-size:12px;letter-spacing:0.2px;color:#3a3a3a;line-height:14px">Входящий</div><div class="t" style="left:253px;top:760px;font-size:12px;letter-spacing:0.2px;color:#3a3a3a;line-height:14px">Запрос документов</div><div class="t" style="left:423px;top:760px;font-size:12px;letter-spacing:0.2px;color:#3a3a3a;line-height:14px">Лучший поставщик</div><div class="t" style="left:669px;top:760px;font-size:12px;letter-spacing:0.2px;color:#3a3a3a;line-height:14px">Гоголь Н.</div><div class="t" style="left:776px;top:760px;font-size:12px;letter-spacing:0.2px;color:#3a3a3a;line-height:14px">19.05.2025</div><div class="t" style="left:904px;top:760px;font-size:12px;letter-spacing:0.2px;color:#3a3a3a;line-height:14px">19.05.2025</div><div class="t" style="left:1024px;top:760px;font-size:12px;letter-spacing:0.2px;color:#3a3a3a;line-height:14px">Проектный отдел</div><div class="cb" style="left:23px;top:788px"></div><div class="t" style="left:58px;top:789px;font-size:12px;letter-spacing:0.2px;color:#3a3a3a;line-height:14px">Вх-000006</div><div class="t" style="left:132px;top:789px;font-size:12px;letter-spacing:0.2px;color:#3a3a3a;line-height:14px">Входящий</div><div class="t" style="left:253px;top:789px;font-size:12px;letter-spacing:0.2px;color:#3a3a3a;line-height:14px">Запрос справки</div><div class="t" style="left:423px;top:789px;font-size:12px;letter-spacing:0.2px;color:#3a3a3a;line-height:14px">Лучший поставщик</div><div class="t" style="left:669px;top:789px;font-size:12px;letter-spacing:0.2px;color:#3a3a3a;line-height:14px">Гоголь Н.</div><div class="t" style="left:776px;top:789px;font-size:12px;letter-spacing:0.2px;color:#3a3a3a;line-height:14px">19.05.2025</div><div class="t" style="left:904px;top:789px;font-size:12px;letter-spacing:0.2px;color:#3a3a3a;line-height:14px">19.05.2025</div><div class="t" style="left:1024px;top:789px;font-size:12px;letter-spacing:0.2px;color:#3a3a3a;line-height:14px">Проектный отдел</div><div class="cb" style="left:23px;top:817px"></div><div class="t" style="left:58px;top:818px;font-size:12px;letter-spacing:0.2px;color:#3a3a3a;line-height:14px">Вх-000005</div><div class="t" style="left:132px;top:818px;font-size:12px;letter-spacing:0.2px;color:#3a3a3a;line-height:14px">Входящий</div><div class="t" style="left:253px;top:818px;font-size:12px;letter-spacing:0.2px;color:#3a3a3a;line-height:14px">Запрос информации</div><div class="t" style="left:423px;top:818px;font-size:12px;letter-spacing:0.2px;color:#3a3a3a;line-height:14px">Лучший поставщик</div><div class="t" style="left:669px;top:818px;font-size:12px;letter-spacing:0.2px;color:#3a3a3a;line-height:14px">Гоголь Н.</div><div class="t" style="left:776px;top:818px;font-size:12px;letter-spacing:0.2px;color:#3a3a3a;line-height:14px">19.05.2025</div><div class="t" style="left:904px;top:818px;font-size:12px;letter-spacing:0.2px;color:#3a3a3a;line-height:14px">19.05.2025</div><div class="t" style="left:1024px;top:818px;font-size:12px;letter-spacing:0.2px;color:#3a3a3a;line-height:14px">Проектный отдел</div><div class="cb" style="left:23px;top:846px"></div><div class="t" style="left:58px;top:847px;font-size:12px;letter-spacing:0.2px;color:#3a3a3a;line-height:14px">Вх-000003</div><div class="t" style="left:132px;top:847px;font-size:12px;letter-spacing:0.2px;color:#3a3a3a;line-height:14px">Входящий</div><div class="t" style="left:253px;top:847px;font-size:12px;letter-spacing:0.2px;color:#3a3a3a;line-height:14px">Прейскурант</div><div class="t" style="left:423px;top:847px;font-size:12px;letter-spacing:0.2px;color:#3a3a3a;line-height:14px">Лучший поставщик</div><div class="t" style="left:669px;top:847px;font-size:12px;letter-spacing:0.2px;color:#3a3a3a;line-height:14px">Беляев А.</div><div class="t" style="left:776px;top:847px;font-size:12px;letter-spacing:0.2px;color:#3a3a3a;line-height:14px">16.05.2025</div><div class="t" style="left:904px;top:847px;font-size:12px;letter-spacing:0.2px;color:#3a3a3a;line-height:14px">16.05.2025</div><div class="t" style="left:1024px;top:847px;font-size:12px;letter-spacing:0.2px;color:#3a3a3a;line-height:14px">Канцелярия</div><div class="foot" style="left:12px;top:868px;width:1588px;height:29px"></div><div class="t" style="left:23px;top:875.3px;font-size:12px;letter-spacing:0.2px;color:#8f989e;line-height:14px">10 строк на странице</div><svg style="left:1577px;top:613px" width="13" height="16" viewBox="0 0 13 16" fill="none" stroke="#fff" stroke-width="1.6"><circle cx="9.8" cy="2.8" r="2"/><circle cx="6.5" cy="8" r="2"/><circle cx="2.8" cy="13.2" r="2"/><path d="M0 2.8h7.8M11.8 2.8H13M0 8h4.5M8.5 8H13M4.8 13.2H13"/></svg>
<svg style="left:1526px;top:877px" width="9" height="10" viewBox="0 0 9 10" fill="none" stroke="#9fb0bc" stroke-width="1.3"><path d="M0.8 0v10M7.5 0.5L3 5l4.5 4.5"/></svg><svg style="left:1549px;top:877px" width="6" height="10" viewBox="0 0 6 10" fill="none" stroke="#9fb0bc" stroke-width="1.3"><path d="M5.5 0.5L1 5l4.5 4.5"/></svg><svg style="left:1583px;top:877px" width="6" height="10" viewBox="0 0 6 10" fill="none" stroke="#9fb0bc" stroke-width="1.3"><path d="M0.5 0.5L5 5 0.5 9.5"/></svg><div class="t" style="left:1566px;top:875px;font-size:12.5px;color:#333;line-height:14px;letter-spacing:1.3px">1</div>
<svg style="left:996px;top:618px" width="9" height="6" viewBox="0 0 9 6" fill="none" stroke="#fff" stroke-width="2"><path d="M0.8 1L4.5 4.7 8.2 1"/></svg>
<div class="abs" style="left:1592px;top:636px;width:8px;height:232px;background:#b9ccd8"></div>
<div class="abs" style="left:1592px;top:648px;width:8px;height:164px;background:#6f7f89"></div>
<svg style="left:1592px;top:638px" width="8" height="6" viewBox="0 0 8 6"><path d="M0.5 5.5L4 1.5 7.5 5.5z" fill="#5c6b75"/></svg>
<svg style="left:1592px;top:859px" width="8" height="6" viewBox="0 0 8 6"><path d="M0.5 0.5L4 4.5 7.5 0.5z" fill="#5c6b75"/></svg>
</div>
</div>
</body></html>
